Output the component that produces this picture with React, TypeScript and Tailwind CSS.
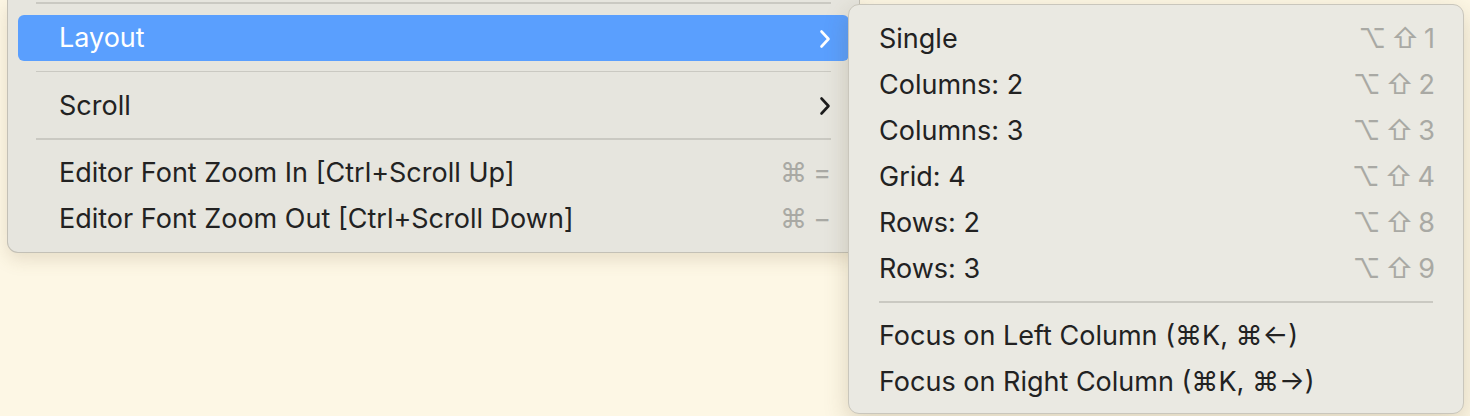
import React from 'react';

const font = { fontFamily: 'Inter, "DejaVu Sans", sans-serif' };

type Item = { label: string; shortcut?: string; sub?: boolean; active?: boolean } | 'sep';

const mainItems: Item[] = [
  { label: 'Layout', sub: true, active: true },
  'sep',
  { label: 'Scroll', sub: true },
  'sep',
  { label: 'Editor Font Zoom In [Ctrl+Scroll Up]', shortcut: '⌘=' },
  { label: 'Editor Font Zoom Out [Ctrl+Scroll Down]', shortcut: '⌘−' },
];

const layoutItems: Item[] = [
  { label: 'Single', shortcut: '1' },
  { label: 'Columns: 2', shortcut: '2' },
  { label: 'Columns: 3', shortcut: '3' },
  { label: 'Grid: 4', shortcut: '4' },
  { label: 'Rows: 2', shortcut: '8' },
  { label: 'Rows: 3', shortcut: '9' },
  'sep',
  { label: 'Focus on Left Column (⌘K, ⌘←)' },
  { label: 'Focus on Right Column (⌘K, ⌘→)' },
];

function Chevron({ white }: { white?: boolean }) {
  return (
    <svg width="12" height="20" viewBox="0 0 12 20" fill="none">
      <path
        d="M2.5 2.5 L9.5 10 L2.5 17.5"
        stroke={white ? '#ffffff' : '#1c1c1c'}
        strokeWidth="2.6"
        strokeLinecap="round"
        strokeLinejoin="round"
      />
    </svg>
  );
}

function Separator({ className }: { className: string }) {
  return (
    <div className={className}>
      <div className="h-[1.5px] bg-[#cac9c2]" />
    </div>
  );
}

export default function App() {
  return (
    <div className="relative h-[416px] w-[1470px] overflow-hidden bg-[#fdf7e5] text-[27px]" style={font}>
      {/* Main menu */}
      <div className="ml-[7px] w-[853px] rounded-b-[11px] border-x border-b border-[#c3c0b6] bg-[#e6e5de] pb-[10px] shadow-[0_6px_18px_rgba(120,100,60,0.18)]">
        <div className="px-[28px] pt-[2px] pb-[11px]">
          <div className="h-[1.5px] bg-[#cac9c2]" />
        </div>
        {mainItems.map((item, i) => {
          if (item === 'sep') return <Separator key={i} className="px-[28px] py-[10px]" />;
          return (
            <div
              key={i}
              className={
                'mx-[10px] flex h-[46px] items-center justify-between rounded-[6px] pl-[41px] pr-[18px] pt-[2px] ' +
                (item.active ? 'bg-[#5a9ffe] text-white' : 'text-[#222222]')
              }
            >
              <span>{item.label}</span>
              {item.sub && <Chevron white={item.active} />}
              {item.shortcut && (
                <span className="flex items-center gap-[6px] text-[#a9a9a4]">
                  <span>{item.shortcut[0]}</span>
                  <span>{item.shortcut[1] === '=' ? '=' : '−'}</span>
                </span>
              )}
            </div>
          );
        })}
      </div>

      {/* Layout submenu */}
      <div className="absolute left-[848px] top-[4px] w-[616px] rounded-[11px] border border-[#c9c6bc] bg-[#eae9e2] pt-[10px] pb-[8px] shadow-[0_8px_24px_rgba(100,80,40,0.22)]">
        {layoutItems.map((item, i) => {
          if (item === 'sep') return <Separator key={i} className="px-[30px] py-[10px]" />;
          return (
            <div key={i} className="flex h-[46px] items-center justify-between pl-[30px] pr-[28px] pt-[2px] text-[#222222]">
              <span>{item.label}</span>
              {item.shortcut && (
                <span className="flex items-center gap-[5px] text-[#a9a9a4]">
                  <span>⌥</span>
                  <span>⇧</span>
                  <span>{item.shortcut}</span>
                </span>
              )}
            </div>
          );
        })}
      </div>
    </div>
  );
}
